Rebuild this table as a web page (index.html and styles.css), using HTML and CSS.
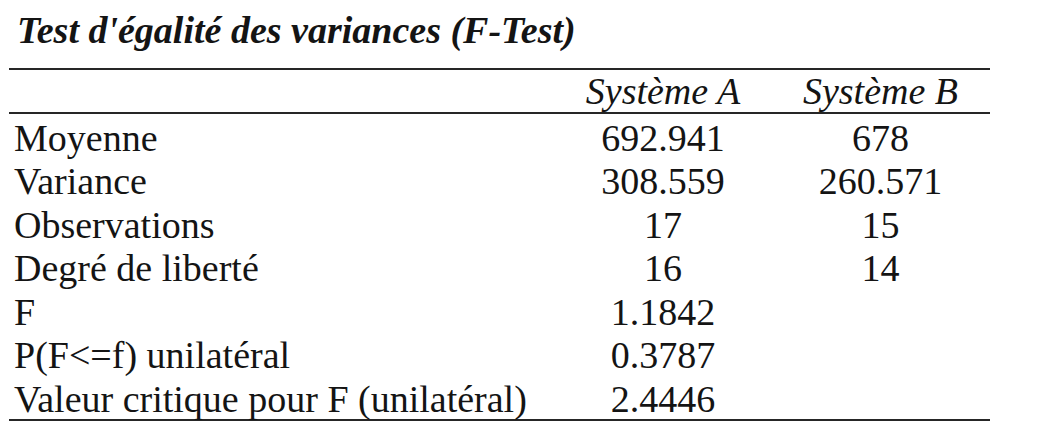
FILE: index.html
```html
<!DOCTYPE html>
<html lang="fr">
<head>
<meta charset="utf-8">
<link rel="stylesheet" href="styles.css">
</head>
<body>
<div class="page">
  <h1 class="title">Test d'égalité des variances (F-Test)</h1>
  <div class="table">
    <div class="row head">
      <div class="cell label"></div>
      <div class="cell num">Système A</div>
      <div class="cell num">Système B</div>
    </div>
    <div class="body">
      <div class="row"><div class="cell label">Moyenne</div><div class="cell num">692.941</div><div class="cell num">678</div></div>
      <div class="row"><div class="cell label">Variance</div><div class="cell num">308.559</div><div class="cell num">260.571</div></div>
      <div class="row"><div class="cell label">Observations</div><div class="cell num">17</div><div class="cell num">15</div></div>
      <div class="row"><div class="cell label">Degré de liberté</div><div class="cell num">16</div><div class="cell num">14</div></div>
      <div class="row"><div class="cell label">F</div><div class="cell num">1.1842</div><div class="cell num"></div></div>
      <div class="row"><div class="cell label">P(F&lt;=f) unilatéral</div><div class="cell num">0.3787</div><div class="cell num"></div></div>
      <div class="row"><div class="cell label">Valeur critique pour F (unilatéral)</div><div class="cell num">2.4446</div><div class="cell num"></div></div>
    </div>
  </div>
</div>
</body>
</html>
```
FILE: styles.css
```css
html, body {
  margin: 0;
  padding: 0;
  background: #ffffff;
}
body {
  font-family: "Liberation Serif", "Times New Roman", serif;
  color: #141414;
}
.page {
  padding: 8px 0 0 9px;
  width: 981px;
}
.title {
  margin: 0 0 16px 0;
  padding-left: 8px;
  font-size: 38px;
  line-height: 44px;
  font-weight: bold;
  font-style: italic;
}
.table {
  border-top: 2.5px solid #262626;
  border-bottom: 2.5px solid #262626;
}
.row {
  display: grid;
  grid-template-columns: 546px 216px 219px;
  height: 43.57px;
  box-sizing: border-box;
  padding-top: 4.5px;
  font-size: 38px;
  line-height: 39px;
  white-space: nowrap;
}
.row.head {
  height: 42px;
  padding-top: 0;
  line-height: 42px;
  font-style: italic;
  border-bottom: 2.5px solid #262626;
  box-sizing: content-box;
}
.cell.label {
  padding-left: 5px;
}
.cell.num {
  text-align: center;
}
```
